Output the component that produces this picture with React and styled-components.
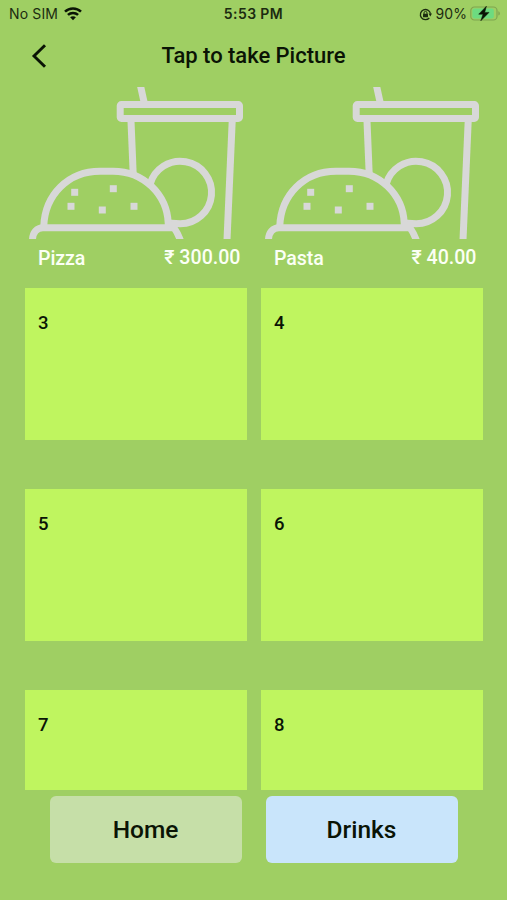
import React from 'react'
import styled, { createGlobalStyle } from 'styled-components'

const GlobalStyle = createGlobalStyle`
	* { box-sizing: border-box; }
	body {
		margin: 0;
		background-color: #9fcf63;
		font-family: Roboto, "Noto Sans", sans-serif;
		color: #0a1405;
	}
`

const Screen = styled.div`
	display: flex;
	flex-direction: column;
	width: 507px;
	height: 900px;
	overflow: hidden;
	background-color: #9fcf63;
`

const StatusBar = styled.div`
	display: grid;
	grid-template-columns: 1fr auto 1fr;
	align-items: center;
	height: 28px;
	padding: 0 6px 0 9px;
	font-family: Inter, sans-serif;
	font-size: 14px;
	line-height: 28px;
	color: #1c2b10;
`

const StatusGroup = styled.div`
	display: flex;
	align-items: center;
	justify-content: ${(props) => props.$align || 'flex-start'};
	gap: ${(props) => props.$gap}px;
`

const StatusText = styled.span`
	letter-spacing: ${(props) => props.$spacing || 0}px;
`

const Clock = styled.span`
	padding-right: 3px;
	font-weight: 600;
	letter-spacing: 0.4px;
`

const Header = styled.header`
	display: grid;
	grid-template-columns: 60px 1fr 60px;
	align-items: center;
	height: 59px;
	padding-bottom: 3px;
`

const BackButton = styled.button`
	display: flex;
	align-items: center;
	padding: 0 0 0 31px;
	border: 0;
	background: none;
	color: #0a1405;
`

const Title = styled.h1`
	margin: 0;
	font-size: 22px;
	font-weight: 500;
	line-height: 28px;
	letter-spacing: -0.03px;
	text-align: center;
`

const MenuList = styled.main`
	display: grid;
	grid-template-columns: 221.5px 221.5px;
	grid-auto-rows: 201px;
	column-gap: 14.5px;
	height: 703px;
	padding-left: 25px;
	overflow: hidden;
`

const Item = styled.article`
	display: flex;
	flex-direction: column;
`

const Picture = styled.div`
	height: 152px;
	overflow: hidden;
`

const EmptySlot = styled.div`
	height: 152px;
	padding: 24px 13px;
	background-color: #bff55f;
	font-size: 18.5px;
	font-weight: 500;
	line-height: 23px;
`

const Caption = styled.div`
	display: flex;
	justify-content: space-between;
	padding: 6px 6px 0 13px;
	color: #fbfff5;
	font-size: 19.6px;
	font-weight: 500;
	line-height: 25px;
`

const Name = styled.span`
	padding-top: 1px;
	letter-spacing: -0.1px;
`

const Price = styled.span`
	white-space: nowrap;
`

const Actions = styled.footer`
	display: flex;
	gap: 24px;
	padding: 6px 0 0 50px;
`

const ActionButton = styled.button`
	width: 192px;
	height: 67px;
	padding: 0 1px 0 0;
	border: 0;
	border-radius: 6px;
	background-color: ${(props) => props.$color};
	color: #0a1405;
	font-family: inherit;
	font-size: 24.5px;
	font-weight: 500;
`

const WifiIcon = () => (
	<svg width="18" height="14" viewBox="0 0 18 14" fill="none" stroke="#0a1405" strokeWidth="2.5">
		<path d="M1 4.6C5.4 0.3 12.6 0.3 17 4.6" />
		<path d="M3.9 7.9C6.8 5.2 11.2 5.2 14.1 7.9" />
		<path d="M9 13.3L6.1 10.3C7.7 8.8 10.3 8.8 11.9 10.3Z" fill="#0a1405" stroke="none" />
	</svg>
)

const RotationLockIcon = () => (
	<svg width="13" height="13" viewBox="0 0 13 13" fill="none" stroke="#1c2b10">
		<path d="M10.3 10A5.1 5.1 0 1 1 11.5 5.6" strokeWidth="1.3" />
		<path d="M9.6 5.6H13L11.3 8.4Z" fill="#1c2b10" stroke="none" />
		<rect x="4" y="5.7" width="5" height="3.6" rx="0.5" fill="#1c2b10" stroke="none" />
		<path d="M5 6V4.9A1.5 1.5 0 0 1 8 4.9V6" strokeWidth="1" />
	</svg>
)

const BatteryIcon = () => (
	<svg width="31" height="16" viewBox="0 0 31 16">
		<rect x="0.8" y="1" width="26.2" height="13" rx="3.6" fill="none" stroke="#7fa551" strokeWidth="1.2" />
		<rect x="2.4" y="2.6" width="21.4" height="9.8" rx="2" fill="#6ddb80" />
		<path d="M28.3 5.2C30.4 5.9 30.4 8.9 28.3 9.6Z" fill="#7fa551" />
		<path d="M16.4 0.2L8.7 8.2H13L10.8 14.8L19 6.4H14.7Z" fill="#0a1405" stroke="#0a1405" strokeWidth="0.5" />
	</svg>
)

const BackIcon = () => (
	<svg width="16" height="24" viewBox="0 0 16 24" fill="none" stroke="currentColor" strokeWidth="2.9">
		<path d="M14 1.2L3 12L14 22.8" />
	</svg>
)

// burger, round side and a drink, cut off at the bottom of the slot
const FoodArt = () => (
	<svg width="221.5" height="152" viewBox="0 0 221.5 152" fill="none" stroke="#d8d8d8" strokeWidth="7">
		<path d="M115.3 -2L119.5 17" />
		<rect x="95.2" y="17.5" width="119.3" height="14" rx="1.2" />
		<path d="M106 34L108.2 87" />
		<path d="M207.2 34L202 153" />
		<path d="M125 97.5A31.3 31.3 0 1 1 155 136.8L143 136" />
		<path d="M18.8 139C20 108 43 84.2 75 84.2H88C119 84.2 142 108 143.2 136C149 139 152 144 155.3 153" />
		<path d="M7.5 153C7.5 145.5 12 140.7 18 140.7H150" />
		<g fill="#d8d8d8" stroke="none">
			<rect x="46.2" y="101.8" width="7" height="7" />
			<rect x="84.8" y="98.2" width="7" height="7" />
			<rect x="42.5" y="115.8" width="7" height="7" />
			<rect x="73.8" y="119.5" width="7" height="7" />
			<rect x="105.5" y="115.8" width="7" height="7" />
		</g>
	</svg>
)

const dishes = [
	{ name: 'Pizza', price: '₹ 300.00' },
	{ name: 'Pasta', price: '₹ 40.00' },
]

const slots = [3, 4, 5, 6, 7, 8]

const App = () => {
	return (
		<Screen>
			<GlobalStyle />
			<StatusBar>
				<StatusGroup $gap={6}>
					<StatusText $spacing={0.15}>No SIM</StatusText>
					<WifiIcon />
				</StatusGroup>
				<Clock>5:53 PM</Clock>
				<StatusGroup $gap={3} $align="flex-end">
					<RotationLockIcon />
					<StatusText $spacing={0.1}>90%</StatusText>
					<BatteryIcon />
				</StatusGroup>
			</StatusBar>
			<Header>
				<BackButton aria-label="Back">
					<BackIcon />
				</BackButton>
				<Title>Tap to take Picture</Title>
			</Header>
			<MenuList>
				{dishes.map((dish) => (
					<Item key={dish.name}>
						<Picture>
							<FoodArt />
						</Picture>
						<Caption>
							<Name>{dish.name}</Name>
							<Price>{dish.price}</Price>
						</Caption>
					</Item>
				))}
				{slots.map((slot) => (
					<Item key={slot}>
						<EmptySlot>{slot}</EmptySlot>
					</Item>
				))}
			</MenuList>
			<Actions>
				<ActionButton $color="#c6dfa8">Home</ActionButton>
				<ActionButton $color="#c9e5fb">Drinks</ActionButton>
			</Actions>
		</Screen>
	)
}

export default App
